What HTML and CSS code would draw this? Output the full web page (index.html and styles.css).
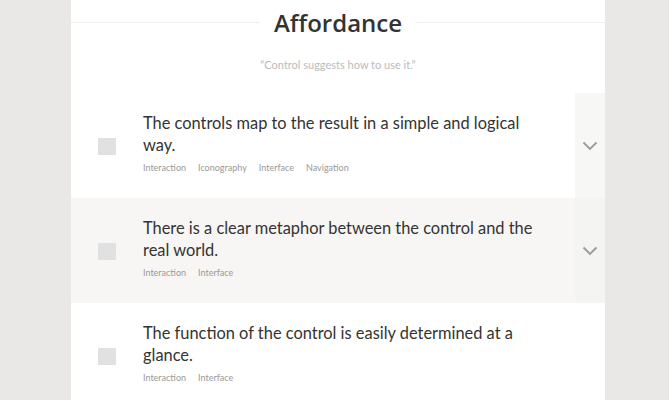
FILE: index.html
```html
<!DOCTYPE html>
<html lang="en">

<head>
  <meta charset="UTF-8">
  <title>Affordance</title>
  <link rel="stylesheet" href="styles.css">
</head>

<body>
  <div class="container">
    <!-- Section heading -->
    <header class="section-head">
      <h2 class="section-title">Affordance</h2>
      <p class="section-quote">&ldquo;Control suggests how to use it.&rdquo;</p>
    </header>

    <!-- Checklist -->
    <ul class="checklist">
      <li class="item">
        <div class="check-col"><span class="checkbox"></span></div>
        <div class="item-body">
          <p class="item-title">The controls map to the result in a simple and logical way.</p>
          <div class="tags">
            <span class="tag">Interaction</span>
            <span class="tag">Iconography</span>
            <span class="tag">Interface</span>
            <span class="tag">Navigation</span>
          </div>
        </div>
        <button class="toggle">
          <svg width="16" height="10" viewBox="0 0 16 10"><path d="M1.5 1.5 L8 8 L14.5 1.5" fill="none" stroke="#9a9a9a" stroke-width="1.8"/></svg>
        </button>
      </li>

      <li class="item item-alt">
        <div class="check-col"><span class="checkbox"></span></div>
        <div class="item-body">
          <p class="item-title">There is a clear metaphor between the control and the real world.</p>
          <div class="tags">
            <span class="tag">Interaction</span>
            <span class="tag">Interface</span>
          </div>
        </div>
        <button class="toggle">
          <svg width="16" height="10" viewBox="0 0 16 10"><path d="M1.5 1.5 L8 8 L14.5 1.5" fill="none" stroke="#9a9a9a" stroke-width="1.8"/></svg>
        </button>
      </li>

      <li class="item">
        <div class="check-col"><span class="checkbox"></span></div>
        <div class="item-body">
          <p class="item-title">The function of the control is easily determined at a glance.</p>
          <div class="tags">
            <span class="tag">Interaction</span>
            <span class="tag">Interface</span>
          </div>
        </div>
        <div class="toggle-empty"></div>
      </li>
    </ul>
  </div>
</body>

</html>
```

FILE: styles.css
```css
body {
  margin: 0;
  padding: 0;
  background-color: #e9e8e6;
  font-family: "Lato", "Noto Sans", sans-serif;
  color: #333;
}

.container {
  width: 534px;
  margin-left: 71px;
  min-height: 400px;
  background-color: #fff;
}

.section-head {
  padding-top: 7px;
  height: 93px;
  box-sizing: border-box;
}

.section-title {
  display: flex;
  align-items: center;
  margin: 0;
  font-size: 24px;
  font-weight: 600;
  line-height: 32px;
  color: #333;
  font-family: "Open Sans", sans-serif;
}

.section-title::before,
.section-title::after {
  content: "";
  flex: 1;
  border-bottom: 1px solid #eeeeec;
  margin: 0 14px;
  position: relative;
  top: -1px;
}

.section-title::before {
  margin-left: 0;
}

.section-title::after {
  margin-right: 0;
}

.section-quote {
  margin: 19px 0 0;
  text-align: center;
  font-size: 11px;
  color: #bbb;
}

.checklist {
  list-style: none;
  margin: 0;
  padding: 0;
}

.item {
  display: flex;
  height: 105px;
  background-color: #fff;
}

.item-alt {
  background-color: #f7f6f4;
}

.check-col {
  width: 72px;
  flex: none;
  display: flex;
  align-items: center;
  padding-left: 27px;
  box-sizing: border-box;
}

.checkbox {
  width: 18px;
  height: 17px;
  background-color: #e1e1e1;
  position: relative;
  top: 1px;
}

.item-body {
  flex: 1;
  padding-top: 19px;
}

.item-title {
  margin: 0;
  max-width: 400px;
  font-size: 16.4px;
  line-height: 22px;
  color: #333;
}

.tags {
  display: flex;
  gap: 12px;
  margin-top: 6px;
}

.tag {
  font-size: 9px;
  color: #999;
  line-height: 12px;
}

.toggle {
  width: 30px;
  flex: none;
  border: none;
  padding: 0;
  background-color: #f7f7f5;
  display: flex;
  align-items: center;
  justify-content: center;
  cursor: pointer;
  outline: none;
}

.item-alt .toggle {
  background-color: #f4f4f2;
}

.toggle-empty {
  width: 30px;
  flex: none;
}
```
